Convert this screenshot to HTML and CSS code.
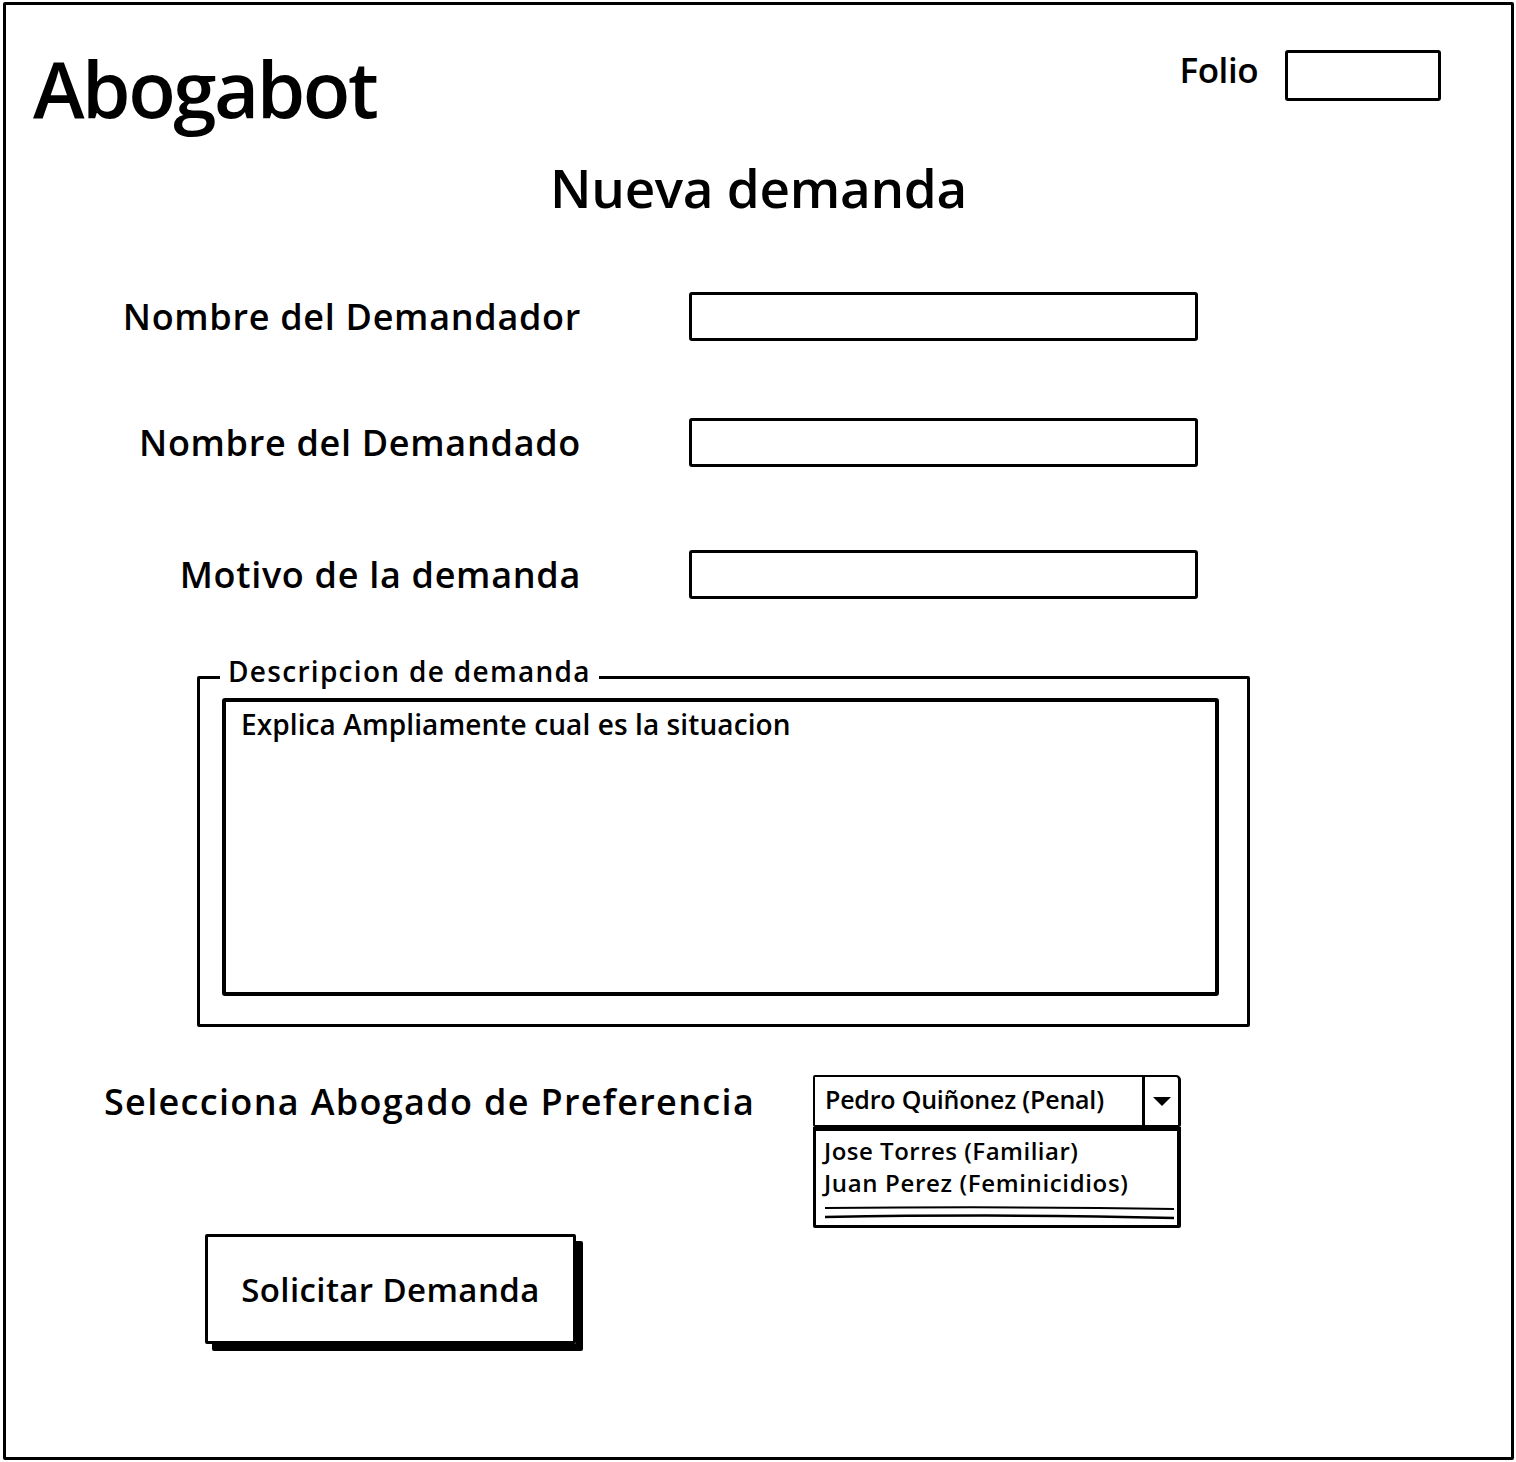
FILE: index.html
```html
<!DOCTYPE html>
<html lang="es">
<head>
<meta charset="utf-8">
<title>Abogabot - Nueva demanda</title>
<link rel="stylesheet" href="styles.css">
</head>
<body>
<div class="frame">
  <header class="header">
    <div class="logo">Abogabot</div>
    <div class="folio">
      <span class="folio-label">Folio</span>
      <div class="folio-box"></div>
    </div>
  </header>

  <h1 class="title">Nueva demanda</h1>

  <div class="form">
    <div class="row row-1">
      <label class="label">Nombre del Demandador</label>
      <div class="input"></div>
    </div>
    <div class="row row-2">
      <label class="label">Nombre del Demandado</label>
      <div class="input"></div>
    </div>
    <div class="row row-3">
      <label class="label">Motivo de la demanda</label>
      <div class="input"></div>
    </div>
  </div>

  <div class="group">
    <span class="group-title">Descripcion de demanda</span>
    <div class="textarea">Explica Ampliamente cual es la situacion</div>
  </div>

  <div class="select-row">
    <span class="select-label">Selecciona Abogado de Preferencia</span>
    <div class="select-wrap">
      <div class="select">
        <span class="select-value">Pedro Quiñonez (Penal)</span>
        <span class="select-btn"><span class="arrow"></span></span>
      </div>
      <div class="list">
        <div class="item">Jose Torres (Familiar)</div>
        <div class="item item-wide">Juan Perez (Feminicidios)</div>
        <svg class="scroll-lines" width="352" height="16" viewBox="0 0 352 16">
          <path d="M1 3 C 120 2, 240 2, 350 4" fill="none" stroke="#000" stroke-width="2"/>
          <path d="M1 12 C 120 10, 240 10, 350 13" fill="none" stroke="#000" stroke-width="2.5"/>
        </svg>
      </div>
    </div>
  </div>

  <div class="actions">
    <div class="button">Solicitar Demanda</div>
  </div>
</div>
</body>
</html>
```

FILE: styles.css
```css
* { box-sizing: border-box; }

html, body {
  margin: 0;
  padding: 0;
  background: #fff;
}

body {
  font-family: "Open Sans", "Liberation Sans", sans-serif;
  font-weight: 600;
  color: #000;
}

.frame {
  width: 1511px;
  height: 1458px;
  margin: 2px 0 0 3px;
  border: 3px solid #000;
  border-radius: 2px;
}

/* header */
.header {
  display: flex;
  justify-content: space-between;
  align-items: flex-start;
}

.logo {
  margin: 44px 0 0 27px;
  font-size: 78px;
  line-height: 1;
  letter-spacing: -2.5px;
  font-weight: 600;
}

.folio {
  display: flex;
  align-items: flex-start;
  gap: 27px;
  margin: 45px 70px 0 0;
}

.folio-label {
  margin-top: 2px;
  font-size: 35px;
  line-height: 1;
  letter-spacing: -0.5px;
}

.folio-box {
  width: 156px;
  height: 51px;
  border: 3px solid #000;
  border-radius: 3px;
}

/* title */
.title {
  margin: 34px 0 0;
  text-align: center;
  font-size: 53px;
  font-weight: 600;
  line-height: 1;
  letter-spacing: -0.3px;
}

/* rows */
.form {
  margin-top: 78px;
}

.row {
  display: grid;
  grid-template-columns: 575px 509px;
  column-gap: 108px;
  align-items: center;
}

.row-2 { margin-top: 77px; }
.row-3 { margin-top: 83px; }

.label {
  text-align: right;
  font-size: 36px;
  line-height: 1;
  letter-spacing: 0.7px;
}

.input {
  height: 49px;
  border: 3px solid #000;
  border-radius: 3px;
}

/* description group */
.group {
  position: relative;
  margin: 77px 0 0 191px;
  width: 1053px;
  height: 351px;
  padding: 19px 0 0 22px;
  border: 3px solid #000;
  border-radius: 2px;
}

.group-title {
  position: absolute;
  top: -22px;
  left: 20px;
  padding: 0 8px;
  background: #fff;
  font-size: 28px;
  line-height: 1;
  letter-spacing: 1.3px;
}

.textarea {
  width: 997px;
  height: 298px;
  padding: 8px 0 0 15px;
  border: 4px solid #000;
  border-radius: 3px;
  font-size: 28px;
  line-height: 1;
  letter-spacing: 0.1px;
}

/* select */
.select-row {
  display: flex;
  align-items: flex-start;
  margin: 48px 0 0 98px;
}

.select-label {
  width: 709px;
  margin-top: 9px;
  font-size: 36px;
  line-height: 1;
  letter-spacing: 1.32px;
}

.select-wrap {
  width: 368px;
}

.select {
  display: flex;
  height: 52px;
  border: 2px solid #000;
  border-right-width: 3px;
  border-radius: 2px 5px 2px 2px;
}

.select-value {
  flex: 1;
  padding: 10px 0 0 10px;
  font-size: 25px;
  line-height: 1;
  letter-spacing: -0.2px;
}

.select-btn {
  width: 36px;
  display: flex;
  align-items: center;
  justify-content: center;
  border-left: 3px solid #000;
}

.arrow {
  width: 0;
  height: 0;
  border-left: 9px solid transparent;
  border-right: 9px solid transparent;
  border-top: 9px solid #000;
}

.list {
  height: 101px;
  padding: 4px 0 0 8px;
  border: 3px solid #000;
  border-top-width: 4px;
  border-right-width: 4px;
  border-radius: 0 0 2px 2px;
}

.item {
  font-size: 24px;
  line-height: 32px;
  letter-spacing: 0.5px;
}

.item-wide {
  letter-spacing: 0.65px;
}

.scroll-lines {
  display: block;
  margin-top: 6px;
}

/* button */
.actions {
  margin: 6px 0 0 199px;
}

.button {
  width: 371px;
  height: 110px;
  display: flex;
  align-items: center;
  justify-content: center;
  border: 3px solid #000;
  border-radius: 2px;
  box-shadow: 7px 7px 0 #000;
  font-size: 33px;
  letter-spacing: 0.4px;
}
```
